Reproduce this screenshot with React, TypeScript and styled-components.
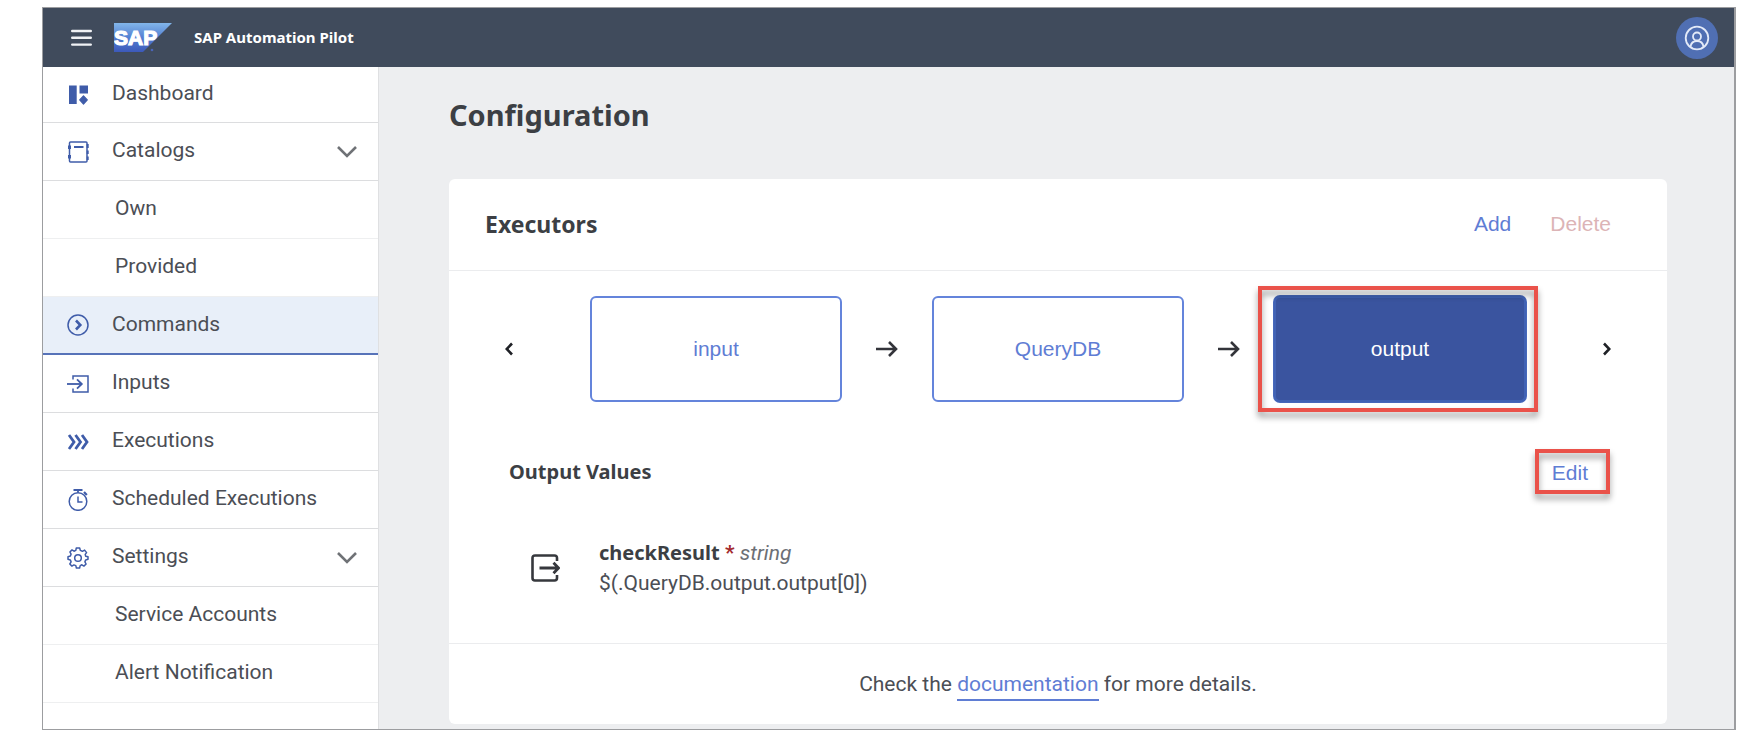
import React from "react";
import styled, { createGlobalStyle, css } from "styled-components";

const color = {
  shell: "#404b5c",
  nav: "#3f5ca9",
  link: "#5f7dd4",
  border: "#6484db",
  active: "#3a549f",
  text: "#3c3f44",
  bodyText: "#4b4e55",
  canvas: "#edeef0",
  callout: "#ea524a",
};

const headingFont = '"Noto Sans", "Open Sans", sans-serif';
const controlFont = '"Liberation Sans", Arial, sans-serif';

const GlobalStyle = createGlobalStyle`
  * { box-sizing: border-box; }
  body {
    margin: 0;
    background: #fff;
    color: ${color.text};
    font-family: Roboto, "Noto Sans", sans-serif;
    font-size: 21px;
    line-height: 30px;
  }
  button { font: inherit; color: inherit; background: none; border: 0; padding: 0; cursor: pointer; }
  h1, h2, h3, p, ul { margin: 0; padding: 0; }
  ul { list-style: none; }
  svg { display: block; flex: none; }
`;

const Page = styled.div`
  padding: 7px 8px 6px 42px;
`;

const Frame = styled.div`
  border: 1px solid #9c9da0;
  border-right-width: 2px;
`;

const ShellBar = styled.header`
  display: flex;
  align-items: center;
  height: 59px;
  padding: 0 16px 0 28px;
  background: ${color.shell};
  color: #fff;
`;

const MenuButton = styled.button`
  margin-right: 22px;
`;

const ProductName = styled.span`
  flex: 1;
  margin-left: 22px;
  padding-bottom: 2px;
  font: bold 15px/20px ${headingFont};
`;

const Avatar = styled.button`
  display: grid;
  place-items: center;
  width: 42px;
  height: 42px;
  border-radius: 50%;
  background: #506fb3;
`;

const Body = styled.div`
  display: flex;
`;

const SideNav = styled.nav`
  flex: none;
  width: 336px;
  background: #fff;
  border-right: 1px solid #dfe0e2;
`;

const NavLink = styled.a<{ $sub?: boolean; $selected?: boolean; $first?: boolean }>`
  display: flex;
  align-items: center;
  gap: 23px;
  height: ${(p) => (p.$first ? 56 : 58)}px;
  padding: 0 21px 0 24px;
  border-bottom: 1px solid #dcdddf;
  color: ${color.bodyText};
  text-decoration: none;
  ${(p) =>
    p.$sub &&
    css`
      padding-left: 72px;
      border-bottom-color: #eeeff0;
    `}
  ${(p) =>
    p.$selected &&
    css`
      background: #e8eff9;
      border-bottom: 2px solid #5773b9;
    `}
`;

const NavLabel = styled.span`
  flex: 1;
  padding-bottom: 3px;
`;

const Main = styled.main`
  flex: 1;
  min-width: 0;
  padding: 28px 67px 5px 70px;
  background: ${color.canvas};
`;

const PageTitle = styled.h1`
  margin-bottom: 44px;
  font: bold 29px/40px ${headingFont};
`;

const Card = styled.section`
  background: #fff;
  border-radius: 6px;
`;

const CardHeader = styled.div`
  display: flex;
  align-items: center;
  justify-content: space-between;
  height: 92px;
  padding: 0 56px 2px 36px;
  border-bottom: 1px solid #ebecee;
`;

const CardTitle = styled.h2`
  font: bold 23px/30px ${headingFont};
`;

const Actions = styled.div`
  display: flex;
  gap: 39px;
`;

const TextButton = styled.button`
  position: relative;
  font-family: ${controlFont};
  color: ${color.link};
  &:disabled {
    color: #dcb4b6;
    cursor: default;
  }
`;

const Carousel = styled.div`
  display: flex;
  align-items: center;
  justify-content: space-between;
  padding: 25px 56px 0;
`;

const Flow = styled.div`
  display: flex;
  align-items: center;
  gap: 34px;
`;

const Step = styled.button<{ $active?: boolean }>`
  position: relative;
  width: 252px;
  height: 106px;
  border: 2px solid ${color.border};
  border-radius: 6px;
  font-family: ${controlFont};
  color: ${color.link};
  ${(p) =>
    p.$active &&
    css`
      background: ${color.active};
      border-color: #4162b4;
      box-shadow: 0 0 0 1px #4768bb;
      color: #fff;
    `}
`;

const Callout = styled.span<{ $inset: string }>`
  position: absolute;
  inset: ${(p) => p.$inset};
  border: 4px solid ${color.callout};
  filter: drop-shadow(0 5px 3px rgba(0, 0, 0, 0.4));
  pointer-events: none;
`;

const SectionHeader = styled.div`
  display: flex;
  align-items: center;
  justify-content: space-between;
  padding: 55px 79px 0 60px;
`;

const SectionTitle = styled.h3`
  padding-bottom: 2px;
  font: bold 20px/30px ${headingFont};
`;

const OutputItem = styled.div`
  display: flex;
  align-items: center;
  gap: 39px;
  padding: 49px 82px 45px;
  border-bottom: 1px solid #ebecee;
`;

const OutputName = styled.strong`
  font: bold 20px/30px ${headingFont};
`;

const Required = styled.span`
  font-weight: bold;
  color: #a32a2e;
`;

const OutputType = styled.em`
  color: #6c6f75;
`;

const OutputValue = styled.p`
  color: ${color.bodyText};
`;

const CardFooter = styled.p`
  padding: 25px 16px;
  color: ${color.bodyText};
  text-align: center;
`;

const DocLink = styled.a`
  padding-bottom: 3px;
  border-bottom: 2px solid ${color.link};
  color: ${color.link};
  text-decoration: none;
`;

const SapLogo = () => (
  <svg width="58" height="29" viewBox="0 0 58 29" role="img" aria-label="SAP">
    <defs>
      <linearGradient id="sap" x1="0" y1="0" x2="0" y2="1">
        <stop offset="0" stopColor="#82b6ea" />
        <stop offset="0.5" stopColor="#5480d2" />
        <stop offset="1" stopColor="#3c59ba" />
      </linearGradient>
    </defs>
    <path d="M0 0H58L29 29H0Z" fill="url(#sap)" />
    <text x="0" y="22" fontFamily="Liberation Sans, Arial, sans-serif" fontWeight="bold" fontSize="21" fill="#fff" stroke="#fff" strokeWidth="1.2">SAP</text>
    <circle cx="38" cy="27" r="1.3" fill="#4a64b8" />
  </svg>
);

const MenuIcon = () => (
  <svg width="21" height="18" viewBox="0 0 21 18" stroke="#f0f2f5" strokeWidth="2.4" strokeLinecap="round">
    <path d="M1.200 2H19.800M1.200 8.800H19.800M1.200 15.600H19.800" />
  </svg>
);

const UserIcon = () => (
  <svg width="26" height="26" viewBox="0 0 26 26" fill="none" stroke="#e3eaf8" strokeWidth="1.8">
    <circle cx="13" cy="13" r="11.3" />
    <circle cx="13" cy="11.5" r="4" />
    <path d="M6.5 21.5C7.2 17.5 9.8 16 13 16s5.8 1.500 6.500 5.500" />
  </svg>
);

const Glyph = ({ children }: { children: React.ReactNode }) => (
  <svg width="22" height="22" viewBox="0 0 22 22" fill="none" stroke={color.nav} strokeWidth="1.5" aria-hidden="true">
    {children}
  </svg>
);

const DashboardIcon = () => (
  <Glyph>
    <g fill={color.nav} stroke="none">
      <path d="M2 1.500H9.700V20H2ZM12.500 1.500H21V9.500H12.500Z" />
      <path d="M16.500 11.800L20.300 15.900L16.500 20L12.700 15.900Z" stroke={color.nav} strokeWidth="1.200" strokeLinejoin="round" />
    </g>
  </Glyph>
);

const CatalogIcon = () => (
  <Glyph>
    <rect x="2.500" y="1" width="17.500" height="20" rx="1" />
    <path d="M7 6H16.500" strokeWidth="2" />
    <path d="M1 4.500H4V8H1ZM1 14H4V17.500H1Z" fill={color.nav} stroke="none" />
    <path d="M20.700 3V7M20.700 9.500V13M20.700 15.500V19" strokeWidth="2" />
  </Glyph>
);

const CommandIcon = () => (
  <Glyph>
    <circle cx="11" cy="11" r="10" />
    <path d="M9 6.500L13.300 11L9 15.500" strokeWidth="2.600" />
  </Glyph>
);

const InputIcon = () => (
  <Glyph>
    <path d="M6 6.500V3H21V19H6V15.500" />
    <path d="M0 11H14" strokeWidth="1.800" />
    <path d="M10 6.300L14.800 11L10 15.700" strokeWidth="1.800" />
  </Glyph>
);

const ExecutionIcon = () => (
  <Glyph>
    <path d="M2 4L7 11L2 18M8.500 4L13.500 11L8.500 18M15 4L20 11L15 18" strokeWidth="2.800" />
  </Glyph>
);

const TimerIcon = () => (
  <Glyph>
    <circle cx="11" cy="12.500" r="8.800" />
    <path d="M11 7.500V13H15.500" />
    <path d="M6.500 1H15.500M11 1V3.500" strokeWidth="1.800" />
    <path d="M17 3L19.800 6" strokeWidth="2.200" />
  </Glyph>
);

const SettingsIcon = () => (
  <Glyph>
    <circle cx="11" cy="11" r="3.300" />
    <path
      d="M9.300 1H12.700L13.300 3.400L15.400 4.300L17.600 3.100L19.600 5.600L18.200 7.400L18.700 9.200L21 9.700V12.300L18.700 12.900L17.900 14.900L19.100 17L16.900 19.100L14.900 17.800L13.200 18.600L12.600 21H9.400L8.800 18.600L6.900 17.900L4.900 19.100L2.800 17L4.100 14.900L3.300 12.900L1 12.300V9.700L3.400 9.100L4.100 7.100L2.900 5L5 2.900L7 4.200L8.800 3.400Z"
      strokeLinejoin="round"
    />
  </Glyph>
);

const ChevronDown = () => (
  <svg width="20" height="12" viewBox="0 0 20 12" fill="none" stroke="#6f7276" strokeWidth="2.600" aria-hidden="true">
    <path d="M1 1L10 10L19 1" />
  </svg>
);

const ChevronSide = ({ right }: { right?: boolean }) => (
  <svg width="8" height="14" viewBox="0 0 8 14" fill="none" stroke="#1f2126" strokeWidth="2.600">
    <path d={right ? "M1 1.500L6.300 7L1 12.500" : "M7 1.500L1.700 7L7 12.500"} />
  </svg>
);

const ArrowRight = () => (
  <svg width="22" height="16" viewBox="0 0 22 16" fill="none" stroke="#33343a" strokeWidth="2.600" aria-hidden="true">
    <path d="M0 8H20M13 1L20 8L13 15" />
  </svg>
);

const OutputIcon = () => (
  <svg width="29" height="28" viewBox="0 0 29 28" fill="none" stroke="#36383d" strokeWidth="2.600" aria-hidden="true">
    <path d="M26 7V4Q26 1.500 23.500 1.500H4Q1.500 1.500 1.500 4V24Q1.500 26.500 4 26.500H23.500Q26 26.500 26 24V21" />
    <path d="M8.500 14H27M22.500 8.800L27.500 14L22.500 19.200" strokeWidth="2.800" />
  </svg>
);

type Item = { label: string; icon?: React.ReactNode; expandable?: boolean; selected?: boolean };

const items: Item[] = [
  { label: "Dashboard", icon: <DashboardIcon /> },
  { label: "Catalogs", icon: <CatalogIcon />, expandable: true },
  { label: "Own" },
  { label: "Provided" },
  { label: "Commands", icon: <CommandIcon />, selected: true },
  { label: "Inputs", icon: <InputIcon /> },
  { label: "Executions", icon: <ExecutionIcon /> },
  { label: "Scheduled Executions", icon: <TimerIcon /> },
  { label: "Settings", icon: <SettingsIcon />, expandable: true },
  { label: "Service Accounts" },
  { label: "Alert Notification" },
];

export default function App() {
  return (
    <Page>
      <GlobalStyle />
      <Frame>
        <ShellBar>
          <MenuButton aria-label="Menu">
            <MenuIcon />
          </MenuButton>
          <SapLogo />
          <ProductName>SAP Automation Pilot</ProductName>
          <Avatar aria-label="Profile">
            <UserIcon />
          </Avatar>
        </ShellBar>
        <Body>
          <SideNav>
            <ul>
              {items.map((item, i) => (
                <li key={item.label}>
                  <NavLink href="#" $first={i === 0} $sub={!item.icon} $selected={item.selected}>
                    {item.icon}
                    <NavLabel>{item.label}</NavLabel>
                    {item.expandable && <ChevronDown />}
                  </NavLink>
                </li>
              ))}
            </ul>
          </SideNav>
          <Main>
            <PageTitle>Configuration</PageTitle>
            <Card>
              <CardHeader>
                <CardTitle>Executors</CardTitle>
                <Actions>
                  <TextButton>Add</TextButton>
                  <TextButton disabled>Delete</TextButton>
                </Actions>
              </CardHeader>
              <Carousel>
                <button aria-label="Previous">
                  <ChevronSide />
                </button>
                <Flow>
                  <Step>input</Step>
                  <ArrowRight />
                  <Step>QueryDB</Step>
                  <ArrowRight />
                  <Step $active>
                    output
                    <Callout $inset="-12px -14px -12px -18px" />
                  </Step>
                </Flow>
                <button aria-label="Next">
                  <ChevronSide right />
                </button>
              </Carousel>
              <SectionHeader>
                <SectionTitle>Output Values</SectionTitle>
                <TextButton>
                  Edit
                  <Callout $inset="-9px -22px -6px -17px" />
                </TextButton>
              </SectionHeader>
              <OutputItem>
                <OutputIcon />
                <div>
                  <p>
                    <OutputName>checkResult</OutputName> <Required>*</Required> <OutputType>string</OutputType>
                  </p>
                  <OutputValue>$(.QueryDB.output.output[0])</OutputValue>
                </div>
              </OutputItem>
              <CardFooter>
                Check the <DocLink href="#">documentation</DocLink> for more details.
              </CardFooter>
            </Card>
          </Main>
        </Body>
      </Frame>
    </Page>
  );
}
